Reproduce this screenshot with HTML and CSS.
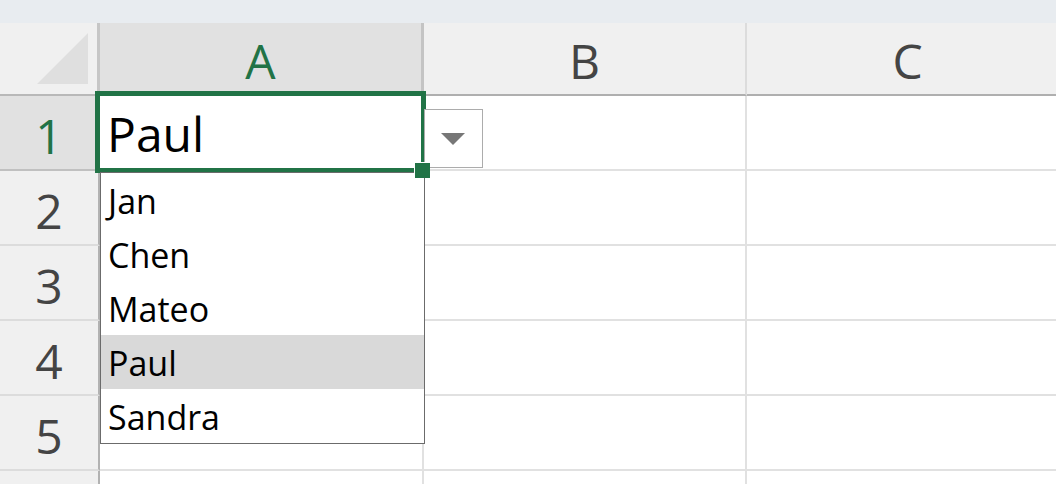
FILE: index.html
```html
<!DOCTYPE html>
<html>
<head>
<meta charset="utf-8">
<link rel="stylesheet" href="styles.css">
</head>
<body>
<div class="top"></div>
<div class="sheet">
  <div class="corner"><svg class="tri" width="52" height="52" viewBox="0 0 52 52"><polygon points="51,0 51,51 0,51" fill="#dfdfdf"/></svg></div>
  <div class="colhead sel colA">A</div>
  <div class="colhead colB">B</div>
  <div class="colhead colC">C</div>

  <div class="rowhead sel">1</div>
  <div class="cell colA"><span class="val">Paul</span></div>
  <div class="cell colB"></div>
  <div class="cell colC"></div>

  <div class="rowhead">2</div>
  <div class="cell colA"></div>
  <div class="cell colB"></div>
  <div class="cell colC"></div>

  <div class="rowhead">3</div>
  <div class="cell colA"></div>
  <div class="cell colB"></div>
  <div class="cell colC"></div>

  <div class="rowhead">4</div>
  <div class="cell colA"></div>
  <div class="cell colB"></div>
  <div class="cell colC"></div>

  <div class="rowhead">5</div>
  <div class="cell colA"></div>
  <div class="cell colB"></div>
  <div class="cell colC"></div>

  <div class="rowhead last"></div>
  <div class="cell colA last"></div>
  <div class="cell colB last"></div>
  <div class="cell colC last"></div>

  <div class="selection"></div>
  <div class="ddbtn"><svg width="24" height="12" viewBox="0 0 24 12"><polygon points="0,0 24,0 12,12" fill="#777777"/></svg></div>
  <ul class="list">
    <li>Jan</li>
    <li>Chen</li>
    <li>Mateo</li>
    <li class="hl">Paul</li>
    <li>Sandra</li>
  </ul>
  <div class="handle"></div>
</div>
</body>
</html>
```

FILE: styles.css
```css
html, body {
  margin: 0;
  padding: 0;
}
body {
  width: 1056px;
  height: 484px;
  overflow: hidden;
  background: #ffffff;
  font-family: "Open Sans", "Noto Sans", sans-serif;
}
.top {
  height: 23px;
  background: #e8ecf0;
}
.sheet {
  position: relative;
  display: grid;
  grid-template-columns: 100px 324px 323px 323px;
  grid-template-rows: 73px repeat(5, 75px) 13px;
}
.corner {
  background: #f0f0f0;
  border-right: 3px solid #c6c6c6;
  border-bottom: 2px solid #b8b8b8;
  position: relative;
}
.tri {
  position: absolute;
  left: 37px;
  top: 10px;
}
.colhead {
  background: #f0f0f0;
  border-bottom: 2px solid #afafaf;
  border-right: 2px solid #dcdcdc;
  color: #444444;
  font-size: 48px;
  display: flex;
  align-items: center;
  justify-content: center;
  padding-top: 4px;
}
.colhead.sel {
  background: #e1e1e1;
  color: #217346;
  border-right: 3px solid #c4c4c4;
}
.rowhead {
  background: #f0f0f0;
  border-right: 2px solid #b2b2b2;
  border-bottom: 2px solid #dcdcdc;
  color: #444444;
  font-size: 48px;
  display: flex;
  align-items: center;
  justify-content: center;
  padding-top: 6px;
}
.rowhead.sel {
  background: #e1e1e1;
  color: #217346;
  border-bottom-color: #c0c0c0;
}
.cell {
  border-right: 2px solid #e1e1e1;
  border-bottom: 2px solid #e1e1e1;
  display: flex;
  align-items: center;
}
.rowhead.last,
.cell.last {
  border-bottom: none;
  padding-top: 0;
}
.val {
  font-size: 48px;
  color: #000000;
  padding-left: 7px;
  padding-top: 2px;
}
.selection {
  position: absolute;
  left: 95px;
  top: 68px;
  width: 321px;
  height: 72px;
  border: 5px solid #217346;
}
.ddbtn {
  position: absolute;
  left: 424px;
  top: 86px;
  width: 57px;
  height: 57px;
  border: 1px solid #acacac;
  background: #ffffff;
  display: flex;
  align-items: center;
  justify-content: center;
}
.ddbtn svg {
  margin-left: -1px;
}
.list {
  position: absolute;
  left: 100px;
  top: 149px;
  width: 323px;
  margin: 0;
  padding: 0;
  list-style: none;
  background: #ffffff;
  border: 1px solid #6b6b6b;
}
.list li {
  height: 54px;
  font-size: 34px;
  color: #000000;
  padding-left: 7px;
  display: flex;
  align-items: center;
  padding-top: 2px;
  box-sizing: border-box;
}
.list li.hl {
  background: #d9d9d9;
}
.handle {
  position: absolute;
  left: 414px;
  top: 139px;
  width: 15px;
  height: 15px;
  background: #217346;
  border-left: 1px solid #ffffff;
  border-top: 1px solid #ffffff;
}
```
